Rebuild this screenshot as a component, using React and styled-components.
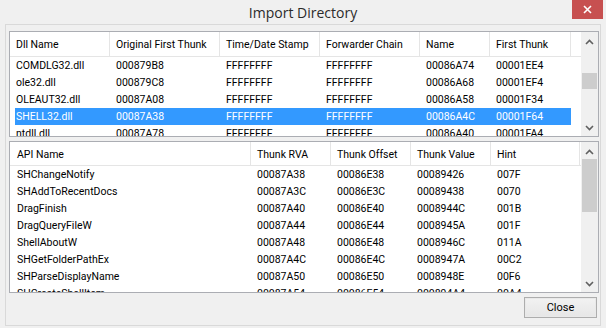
import React from "react";
import styled, { createGlobalStyle } from "styled-components";

const Global = createGlobalStyle`
  html, body { margin: 0; padding: 0; background: #f0f0f0; }
  * { box-sizing: border-box; }
`;

const Window = styled.div`
  width: 606px;
  height: 328px;
  background: #f0f0f0;
  display: flex;
  flex-direction: column;
  font-family: Roboto, "Liberation Sans", sans-serif;
  font-size: 10.5px;
  color: #000;
  overflow: hidden;
`;

const TitleBar = styled.div`
  height: 24px;
  flex: none;
  display: grid;
  grid-template-columns: 1fr auto 1fr;
  align-items: start;
`;

const Title = styled.div`
  grid-column: 2;
  font-family: "Open Sans", Roboto, sans-serif;
  font-size: 14px;
  line-height: 26px;
  color: #2b2b2b;
`;

const CloseX = styled.div`
  grid-column: 3;
  justify-self: end;
  margin-right: 3px;
  width: 31px;
  height: 19px;
  background: #c75050;
  display: flex;
  align-items: center;
  justify-content: center;
`;

const Frame = styled.div`
  margin: 0 5px;
  height: 302px;
  flex: none;
  border: 1px solid #d9d9d9;
  padding: 6px 1px 0 3px;
  display: flex;
  flex-direction: column;
  gap: 4px;
`;

const List = styled.div`
  height: ${(p) => p.$h}px;
  flex: none;
  border: 1px solid #abadb3;
  background: #fff;
  display: grid;
  grid-template-columns: 1fr 17px;
  overflow: hidden;
`;

const Body = styled.div`
  display: flex;
  flex-direction: column;
  overflow: hidden;
  min-width: 0;
`;

const Header = styled.div`
  height: ${(p) => p.$h}px;
  flex: none;
  display: flex;
  border-bottom: 1px solid #e5e5e5;
`;

const HeadCell = styled.div`
  width: ${(p) => p.$w}px;
  flex: none;
  padding-left: ${(p) => p.$pad}px;
  border-right: 1px solid #e5e5e5;
  display: flex;
  align-items: center;
  white-space: nowrap;
  overflow: hidden;
  padding-top: 1px;
`;

const HeadFill = styled.div`
  flex: 1;
`;

const Row = styled.div`
  height: 17px;
  flex: none;
  margin-left: 5px;
  display: flex;
  align-items: center;
  background: ${(p) => (p.$sel ? "#3399ff" : "transparent")};
  color: ${(p) => (p.$sel ? "#fff" : "#000")};
  width: max-content;
`;

const Cell = styled.div`
  width: ${(p) => p.$w}px;
  flex: none;
  padding-left: ${(p) => p.$pad}px;
  white-space: nowrap;
  overflow: hidden;
`;

const ScrollBar = styled.div`
  background: #f0f0f0;
  display: flex;
  flex-direction: column;
`;

const Arrow = styled.div`
  height: 17px;
  flex: none;
  display: flex;
  align-items: center;
  justify-content: center;
  padding-top: ${(p) => (p.$up ? 2 : 0)}px;
`;

const Track = styled.div`
  flex: 1;
  display: flex;
  flex-direction: column;
`;

const Thumb = styled.div`
  margin: ${(p) => p.$top}px 1px 0 1px;
  height: ${(p) => p.$h}px;
  background: #cdcdcd;
  flex: none;
`;

const Footer = styled.div`
  display: flex;
  justify-content: flex-end;
  padding-right: 2px;
`;

const Button = styled.button`
  width: 73px;
  height: 21px;
  border: 1px solid #adadad;
  box-shadow: inset 0 0 0 1px #e9e9e9;
  background: linear-gradient(#f2f2f2, #e6e6e6);
  font-family: Roboto, "Liberation Sans", sans-serif;
  font-size: 11px;
  color: #000;
  padding: 0;
`;

const Chevron = ({ up }) => (
  <svg width="9" height="6" viewBox="0 0 9 6">
    <path
      d={up ? "M1 5 L4.5 1.5 L8 5" : "M1 1 L4.5 4.5 L8 1"}
      fill="none"
      stroke="#606060"
      strokeWidth="1.6"
    />
  </svg>
);

const Scroll = ({ top, h }) => (
  <ScrollBar>
    <Arrow $up>
      <Chevron up />
    </Arrow>
    <Track>
      <Thumb $top={top} $h={h} />
    </Track>
    <Arrow>
      <Chevron />
    </Arrow>
  </ScrollBar>
);

const dllCols = [
  { t: "Dll Name", w: 100, rw: 95, rp: 1 },
  { t: "Original First Thunk", w: 110, rw: 110, rp: 6 },
  { t: "Time/Date Stamp", w: 100, rw: 100, rp: 6 },
  { t: "Forwarder Chain", w: 100, rw: 100, rp: 6 },
  { t: "Name", w: 70, rw: 70, rp: 6 },
  { t: "First Thunk", w: 81, rw: 81, rp: 6 },
];

const dlls = [
  ["COMDLG32.dll", "000879B8", "FFFFFFFF", "FFFFFFFF", "00086A74", "00001EE4"],
  ["ole32.dll", "000879C8", "FFFFFFFF", "FFFFFFFF", "00086A68", "00001EF4"],
  ["OLEAUT32.dll", "00087A08", "FFFFFFFF", "FFFFFFFF", "00086A58", "00001F34"],
  ["SHELL32.dll", "00087A38", "FFFFFFFF", "FFFFFFFF", "00086A4C", "00001F64"],
  ["ntdll.dll", "00087A78", "FFFFFFFF", "FFFFFFFF", "00086A40", "00001FA4"],
];

const apiCols = [
  { t: "API Name", w: 241, rw: 236, rp: 2, hp: 7 },
  { t: "Thunk RVA", w: 80, rw: 80, rp: 6 },
  { t: "Thunk Offset", w: 80, rw: 80, rp: 6 },
  { t: "Thunk Value", w: 80, rw: 80, rp: 6 },
  { t: "Hint", w: 89, rw: 89, rp: 6 },
];

const apis = [
  ["SHChangeNotify", "00087A38", "00086E38", "00089426", "007F"],
  ["SHAddToRecentDocs", "00087A3C", "00086E3C", "00089438", "0070"],
  ["DragFinish", "00087A40", "00086E40", "0008944C", "001B"],
  ["DragQueryFileW", "00087A44", "00086E44", "0008945A", "001F"],
  ["ShellAboutW", "00087A48", "00086E48", "0008946C", "011A"],
  ["SHGetFolderPathEx", "00087A4C", "00086E4C", "0008947A", "00C2"],
  ["SHParseDisplayName", "00087A50", "00086E50", "0008948E", "00F6"],
  ["SHCreateShellItem", "00087A54", "00086E54", "000894A4", "00A4"],
];

const Table = ({ cols, rows, h, headH, sel, thumbTop, thumbH }) => (
  <List $h={h}>
    <Body>
      <Header $h={headH}>
        {cols.map((c) => (
          <HeadCell key={c.t} $w={c.w} $pad={c.hp || 6}>
            {c.t}
          </HeadCell>
        ))}
        <HeadFill />
      </Header>
      {rows.map((r, i) => (
        <Row key={i} $sel={i === sel}>
          {r.map((v, j) => (
            <Cell key={j} $w={cols[j].rw} $pad={cols[j].rp}>
              {v}
            </Cell>
          ))}
        </Row>
      ))}
    </Body>
    <Scroll top={thumbTop} h={thumbH} />
  </List>
);

export default function App() {
  return (
    <>
      <Global />
      <Window>
        <TitleBar>
          <Title>Import Directory</Title>
          <CloseX>
            <svg width="9" height="9" viewBox="0 0 9 9">
              <path d="M1 1 L8 8 M8 1 L1 8" stroke="#fff" strokeWidth="1.6" />
            </svg>
          </CloseX>
        </TitleBar>
        <Frame>
          <Table
            cols={dllCols}
            rows={dlls}
            h={106}
            headH={25}
            sel={3}
            thumbTop={24}
            thumbH={16}
          />
          <Table
            cols={apiCols}
            rows={apis}
            h={152}
            headH={24}
            sel={-1}
            thumbTop={0}
            thumbH={53}
          />
          <Footer>
            <Button>Close</Button>
          </Footer>
        </Frame>
      </Window>
    </>
  );
}
